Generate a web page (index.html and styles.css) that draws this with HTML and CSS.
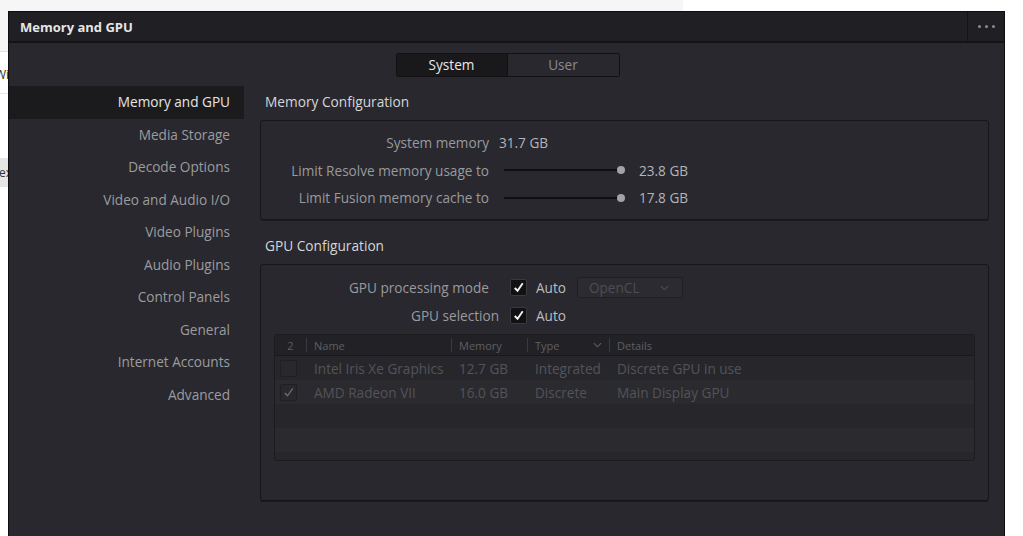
FILE: index.html
```html
<!DOCTYPE html>
<html lang="en">
<head>
  <meta charset="UTF-8">
  <title>Memory and GPU</title>
  <link rel="stylesheet" href="styles.css">
</head>
<body>
  <div class="desk">
    <div class="desk-top"></div>
    <div class="desk-strip">
      <div class="strip-head"></div>
      <div class="strip-row">Wi</div>
      <div class="strip-gap"></div>
      <div class="strip-chip">ex</div>
    </div>
  </div>

  <div class="window">
    <header class="titlebar">
      <span class="title">Memory and GPU</span>
      <div class="more"><span></span><span></span><span></span></div>
    </header>

    <div class="window-body">
      <div class="tabs">
        <div class="tab active">System</div>
        <div class="tab">User</div>
      </div>

      <div class="panes">
        <nav class="sidebar">
          <a class="nav-item active">Memory and GPU</a>
          <a class="nav-item">Media Storage</a>
          <a class="nav-item">Decode Options</a>
          <a class="nav-item">Video and Audio I/O</a>
          <a class="nav-item">Video Plugins</a>
          <a class="nav-item">Audio Plugins</a>
          <a class="nav-item">Control Panels</a>
          <a class="nav-item">General</a>
          <a class="nav-item">Internet Accounts</a>
          <a class="nav-item">Advanced</a>
        </nav>

        <main class="content">
          <h3 class="section-title">Memory Configuration</h3>
          <div class="group mem-group">
            <div class="row">
              <span class="label">System memory</span>
              <span class="value">31.7 GB</span>
            </div>
            <div class="row">
              <span class="label">Limit Resolve memory usage to</span>
              <div class="slider"><div class="track"></div><div class="knob"></div></div>
              <span class="value slider-value">23.8 GB</span>
            </div>
            <div class="row">
              <span class="label">Limit Fusion memory cache to</span>
              <div class="slider"><div class="track"></div><div class="knob"></div></div>
              <span class="value slider-value">17.8 GB</span>
            </div>
          </div>

          <h3 class="section-title">GPU Configuration</h3>
          <div class="group gpu-group">
            <div class="row">
              <span class="label wide pad">GPU processing mode</span>
              <span class="check on">
                <svg viewBox="0 0 16 16"><polyline points="4,8.5 7,11.5 12.5,3.5"/></svg>
              </span>
              <span class="auto">Auto</span>
              <div class="dropdown">
                <span>OpenCL</span>
                <svg viewBox="0 0 10 6"><polyline points="1,1 5,5 9,1"/></svg>
              </div>
            </div>
            <div class="row">
              <span class="label wide">GPU selection</span>
              <span class="check on">
                <svg viewBox="0 0 16 16"><polyline points="4,8.5 7,11.5 12.5,3.5"/></svg>
              </span>
              <span class="auto">Auto</span>
            </div>

            <div class="gpu-table">
              <div class="trow thead">
                <div class="cell c-sel">2</div>
                <div class="cell c-name">Name</div>
                <div class="cell c-mem">Memory</div>
                <div class="cell c-type">Type
                  <svg viewBox="0 0 10 6"><polyline points="1,1 5,5 9,1"/></svg>
                </div>
                <div class="cell c-det">Details</div>
              </div>
              <div class="trow">
                <div class="cell c-sel"><span class="tcheck"></span></div>
                <div class="cell c-name">Intel Iris Xe Graphics</div>
                <div class="cell c-mem">12.7 GB</div>
                <div class="cell c-type">Integrated</div>
                <div class="cell c-det">Discrete GPU in use</div>
              </div>
              <div class="trow">
                <div class="cell c-sel"><span class="tcheck">
                  <svg viewBox="0 0 16 16"><polyline points="4,8.5 7,11.5 12.5,3.5"/></svg>
                </span></div>
                <div class="cell c-name">AMD Radeon VII</div>
                <div class="cell c-mem">16.0 GB</div>
                <div class="cell c-type">Discrete</div>
                <div class="cell c-det">Main Display GPU</div>
              </div>
              <div class="trow"></div>
              <div class="trow"></div>
              <div class="trow"></div>
            </div>
          </div>
        </main>
      </div>
    </div>
  </div>
</body>
</html>
```

FILE: styles.css
```css
body {
  margin: 0;
  width: 1023px;
  height: 536px;
  overflow: hidden;
  position: relative;
  background: #fff;
  font-family: "Open Sans", "Liberation Sans", sans-serif;
}

/* what shows of the desktop behind the window */
.desk-top {
  position: absolute;
  left: 0;
  top: 0;
  width: 683px;
  height: 11px;
  background: #f6f6f6;
}
.desk-strip {
  position: absolute;
  left: 0;
  top: 0;
  width: 8px;
  height: 536px;
  overflow: hidden;
  background: #fff;
}
.strip-head {
  height: 51px;
  background: #f6f6f6;
  border-bottom: 1px solid #e2e2e2;
}
.strip-row {
  height: 41px;
  line-height: 45px;
  font-size: 12px;
  color: #333;
  white-space: nowrap;
  margin-left: -5px;
  border-bottom: 1px solid #e6e6e6;
}
.strip-gap {
  height: 64px;
}
.strip-chip {
  height: 29px;
  line-height: 29px;
  font-size: 12px;
  color: #333;
  white-space: nowrap;
  margin-left: -1px;
  background: #e6e6e6;
}

/* window */
.window {
  position: absolute;
  left: 8px;
  top: 11px;
  width: 995px;
  height: 530px;
  background: #28282e;
  border: 1px solid #0e0e10;
  display: flex;
  flex-direction: column;
}
.titlebar {
  height: 29px;
  flex-shrink: 0;
  background: #1f1f24;
  border-bottom: 2px solid #141417;
  display: flex;
  align-items: center;
  justify-content: space-between;
}
.title {
  padding-left: 11px;
  font-size: 13px;
  font-weight: 700;
  color: #e6e6e6;
}
.more {
  height: 100%;
  width: 36px;
  border-left: 1px solid #141417;
  display: flex;
  align-items: center;
  justify-content: center;
  gap: 4px;
}
.more span {
  width: 3px;
  height: 3px;
  border-radius: 50%;
  background: #8c8c90;
}

.window-body {
  flex: 1;
  display: flex;
  flex-direction: column;
}
.tabs {
  align-self: center;
  margin: 10px 0 9px 2px;
  display: flex;
  border: 1px solid #111113;
  border-radius: 2px;
  overflow: hidden;
}
.tab {
  width: 111px;
  height: 22px;
  line-height: 22px;
  text-align: center;
  font-size: 13.6px;
  color: #8a8a8e;
  background: #28282e;
}
.tab.active {
  width: 110px;
  color: #e8e8e8;
  background: #19191b;
  border-right: 1px solid #111113;
}

.panes {
  flex: 1;
  display: flex;
}
.sidebar {
  width: 235px;
  flex-shrink: 0;
  display: flex;
  flex-direction: column;
}
.nav-item {
  height: 32.55px;
  line-height: 32px;
  padding-right: 14px;
  text-align: right;
  font-size: 13.6px;
  color: #9c9c9f;
}
.nav-item.active {
  color: #e6e6e6;
  background: #1b1b1e;
}

.content {
  flex: 1;
  padding: 0 15px 0 16px;
}
.section-title {
  margin: 0;
  height: 34px;
  line-height: 32px;
  padding-left: 5px;
  font-size: 13.7px;
  font-weight: 400;
  color: #d6d6d8;
}
.group {
  border: 1px solid #161618;
  border-radius: 3px;
  box-shadow: 0 1px 0 #1a1a1d;
}
.mem-group {
  height: 82px;
  padding: 8px 0;
  margin-bottom: 10px;
}
.gpu-group {
  height: 226px;
  padding-top: 9px;
}
.row {
  height: 27.5px;
  display: flex;
  align-items: center;
  font-size: 13.6px;
}
.label {
  width: 228px;
  text-align: right;
  color: #9a9a9d;
}
.label.wide {
  width: 238px;
}
.label.pad {
  width: 228px;
  padding-right: 10px;
}
.value {
  margin-left: 10px;
  color: #b4b4b7;
}
.slider {
  margin-left: 15px;
  display: flex;
  align-items: center;
}
.track {
  width: 114px;
  height: 2px;
  background: #101012;
}
.knob {
  width: 8px;
  height: 8px;
  margin-left: -1px;
  border-radius: 50%;
  background: #a3a3a6;
}
.value.slider-value {
  margin-left: 14px;
}

.check {
  margin-left: 11px;
  width: 15px;
  height: 15px;
  border: 1px solid #3a3a3e;
  border-radius: 2px;
  background: #111113;
  display: flex;
}
.check svg {
  width: 15px;
  height: 15px;
  fill: none;
  stroke: #f2f2f2;
  stroke-width: 2;
}
.auto {
  margin-left: 9px;
  color: #bdbdc0;
}
.dropdown {
  margin-left: 11px;
  width: 106px;
  height: 21px;
  box-sizing: border-box;
  border: 1px solid #202024;
  border-radius: 2px;
  background: #2b2b30;
  display: flex;
  align-items: center;
  justify-content: space-between;
  padding: 0 13px 0 11px;
  color: #4e4e54;
}
.dropdown svg {
  width: 9px;
  height: 6px;
  fill: none;
  stroke: #4e4e54;
  stroke-width: 1.2;
}

/* gpu list */
.gpu-table {
  margin: 5px 13px 0 13px;
  height: 125px;
  overflow: hidden;
  border: 1px solid #1c1c1f;
  border-radius: 3px;
}
.trow {
  height: 24px;
  display: flex;
  align-items: center;
  font-size: 13.6px;
  color: #535358;
}
.trow:nth-child(even) {
  background: #27272b;
}
.trow:nth-child(odd) {
  background: #2a2a2f;
}
.trow.thead {
  height: 20px;
  background: #222226;
  border-bottom: 1px solid #19191b;
  font-size: 11px;
  color: #5e5e64;
}
.cell {
  height: 100%;
  display: flex;
  align-items: center;
  box-sizing: border-box;
  padding-left: 7px;
  white-space: nowrap;
}
.thead .cell {
  border-right: 1px solid #3a3a3f;
  height: 14px;
}
.thead .cell.c-det {
  border-right: none;
}
.c-sel {
  width: 32px;
  padding-left: 5px;
}
.thead .c-sel {
  justify-content: center;
  padding-left: 0;
}
.c-name {
  width: 145px;
}
.c-mem {
  width: 76px;
}
.c-type {
  width: 82px;
  justify-content: space-between;
  padding-right: 7px;
}
.c-type svg {
  width: 9px;
  height: 6px;
  fill: none;
  stroke: #5e5e64;
  stroke-width: 1.2;
}
.c-det {
  flex: 1;
}
.tcheck {
  width: 15px;
  height: 15px;
  border: 1px solid #202023;
  border-radius: 2px;
  background: #29292d;
  display: flex;
}
.tcheck svg {
  width: 15px;
  height: 15px;
  fill: none;
  stroke: #6a6a70;
  stroke-width: 1.4;
}
```
